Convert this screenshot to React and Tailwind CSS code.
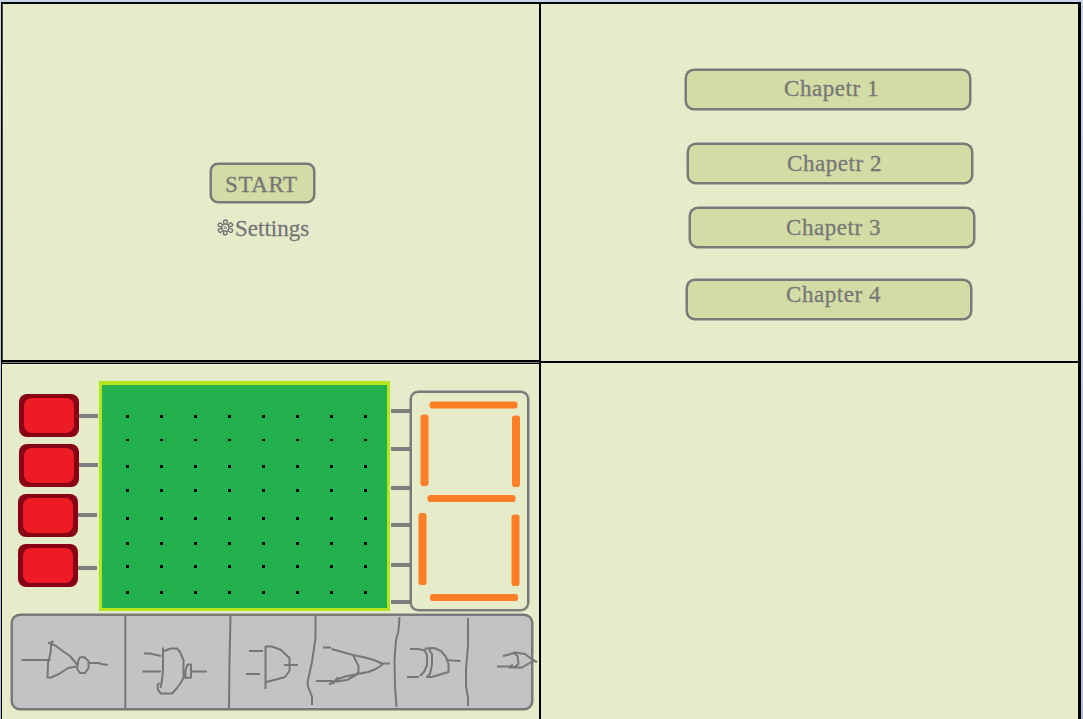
import React from 'react';

const chapters = [
  { label: 'Chapetr 1', box: 'ml-[144px] mt-[65px]', text: 'pl-[97px] pt-[5px]' },
  { label: 'Chapetr 2', box: 'ml-[146px] mt-[33px]', text: 'pl-[98px] pt-[6px]' },
  { label: 'Chapetr 3', box: 'ml-[148px] mt-[23px]', text: 'pl-[95px] pt-[6px]' },
  { label: 'Chapter 4', box: 'ml-[145px] mt-[31px]', text: 'pl-[98px] pt-[1px]' },
];

const inputs = [
  { box: 'ml-[17px]', wire: 'mt-[20px]' },
  { box: 'ml-[17px] mt-[7px]', wire: 'mt-[19px]' },
  { box: 'ml-[16px] mt-[7px]', wire: 'mt-[19px]' },
  { box: 'ml-[16px] mt-[7px]', wire: 'mt-[22px]' },
];

const outputs = ['mt-[45px]', 'mt-[34px]', 'mt-[35px]', 'mt-[33px]', 'mt-[36px]', 'mt-[33px]'];

const dotXs = [126, 160, 194, 228, 262, 296, 330, 364];
const dotYs = [415, 439, 465, 489, 517, 542, 565, 591];

function Gear() {
  return (
    <svg className="mt-[3px] h-[17px] w-[17px]" viewBox="0 0 17 17" fill="none" stroke="#777777">
      <circle cx="8.4" cy="8.6" r="3.6" strokeWidth="1.5" />
      <circle cx="8.4" cy="8.6" r="1.1" strokeWidth="1" />
      <path
        strokeWidth="1.4"
        d="M7.2 4.9 6.4 1.8 8.3 1 10.4 1.7 9.8 4.9M11.4 6.4l1-2 1.8-.5 1.5 1.8-.6 1.4-2.9.7M12.2 9.6l2.6.2 1 1.6-1.2 1.9-1.4.1-2.3-1.7M9.7 12.3l.3 3-1.8.6-1.8-.7.6-3M5.8 11.4l-2.1 2.1-1.7-.6-.8-2 1.1-1.2 2.4-.2M4.7 7.9 1.6 7.2 1 5.7 2.4 4l1.9.4 1.3 1.8"
      />
    </svg>
  );
}

function StartScreen() {
  return (
    <section className="flex h-[356px] flex-col border-l border-[#4a4c40] bg-[#e6ebca] pt-[159px]">
      <button className="ml-[207px] flex h-[40px] w-[105px] items-start rounded-[8px] border-2 border-[#7a7a7a] bg-[#d2dca4] pl-[13px] pt-[7px] text-left leading-[26px] tracking-[0.6px] shadow-[0_0_0_0.5px_#7a7a7a]">
        START
      </button>
      <div className="ml-[214px] mt-[13px] flex h-[26px] items-start leading-[26px]">
        <Gear />
        <span className="ml-px">Settings</span>
      </div>
    </section>
  );
}

function ChapterScreen() {
  return (
    <section className="flex h-[357px] flex-col bg-[#e6ebca]">
      {chapters.map((c) => (
        <button
          key={c.label}
          className={`h-[41px] w-[286px] shrink-0 rounded-[9px] border-2 border-[#7a7a7a] bg-[#d2dca4] text-left shadow-[0_0_0_0.5px_#7a7a7a] ${c.box}`}
        >
          <span className={`flex h-full items-start whitespace-pre leading-[26px] tracking-[0.55px] ${c.text}`}>{c.label}</span>
        </button>
      ))}
    </section>
  );
}

function Inputs() {
  return (
    <div className="flex w-[97px] flex-col pt-[30px]">
      {inputs.map((i, n) => (
        <div key={n} className={`flex h-[43px] shrink-0 ${i.box}`}>
          <div className="h-[43px] w-[60px] shrink-0 rounded-[8px] bg-[#880015] px-[5px] pb-[4px] pt-[4px]">
            <div className="h-full rounded-[8px] bg-[#ed1c24]" />
          </div>
          <div className={`h-[4px] w-[19px] bg-[#7f7f7f] ${i.wire}`} />
        </div>
      ))}
    </div>
  );
}

function Board() {
  return (
    <div className="mt-[17px] h-[230px] w-[291px] shrink-0 border-x-[3px] border-b-[3px] border-t-[4px] border-[#b5e61d] bg-[#22b14c]">
      <svg className="h-[223px] w-[285px]" viewBox="102 385 285 223" shapeRendering="crispEdges">
        {dotYs.map((y) =>
          dotXs.map((x) => <rect key={`${x}-${y}`} x={x} y={y} width="3" height={y === 439 ? 2 : 3} fill="#000" />)
        )}
      </svg>
    </div>
  );
}

function Outputs() {
  return (
    <div className="flex w-[20px] shrink-0 flex-col pl-px">
      {outputs.map((o, n) => (
        <div key={n} className={`h-[4px] w-[19px] shrink-0 bg-[#7f7f7f] ${o}`} />
      ))}
    </div>
  );
}

function Display() {
  return (
    <div className="mt-[27px] h-[220px] w-[119px] shrink-0 rounded-[8px] border-2 border-[#7a7a7a] shadow-[0_0_0_0.5px_#7a7a7a]">
      <svg className="h-[216px] w-[115px]" viewBox="412 393 115 216" fill="#ff7f27">
        <rect x="429.5" y="401.5" width="88" height="7" rx="2.8" />
        <rect x="420.5" y="414.5" width="8" height="71.5" rx="2.8" />
        <rect x="512" y="415.5" width="8" height="71.5" rx="2.8" />
        <rect x="427.5" y="495" width="88" height="7" rx="2.8" />
        <rect x="418.5" y="513" width="8" height="72" rx="2.8" />
        <rect x="511.5" y="514.5" width="8" height="71.5" rx="2.8" />
        <rect x="430" y="594" width="88" height="7" rx="2.8" />
      </svg>
    </div>
  );
}

function GateTray() {
  return (
    <div className="ml-[9px] mt-[2px] h-[96px] w-[522px] shrink-0 rounded-[9px] border-2 border-[#7a7a7a] bg-[#c3c3c3] shadow-[0_0_0_0.5px_#7a7a7a]">
      <svg
        className="h-[92px] w-[518px] overflow-visible"
        viewBox="13 616 518 92"
        fill="none"
        stroke="#777777"
        strokeWidth="2"
        strokeLinejoin="round"
      >
        <path d="M125.3 615V708M230.5 615L229.5 661 229 710M315.5 615.5V638L312 662 308 680Q307 686 309 689L312 697V705M399.5 617L398.5 631 396 640 394.5 660 395 686 396.5 707M468 618V646L466 669V686L468 698V706" />
        <path d="M21.5 660H50.5M51.5 641L50.5 653 48 663 47.5 677.5H51L59 674 68 668 77 666.5M48 642.5L56 646 64 652 70 656 77 664.5M49.5 644.5L53.5 641M80 657.5L84 657 88.5 661V668L85 673H80L77 668.5 78.5 660ZM89 663H99L101 664 108 665" />
        <path d="M144 653.5H150L161 656M142.5 671.5H161M163 647.5V671L162 680 160.5 688M162.5 651.5L171 648.5H177L180 652 183.5 660V678L180 684 177 688 172 693.5H161L158 690 157.5 685 159.5 683M185.5 678V671L187.5 664.5H191V677.5ZM192 671.5H207" />
        <path d="M249 651H263M246 674H260M265.5 689V646M265.5 646.5H272L281 650 289.5 658V671L285 677 278 679 268 681.5 265.5 682.5M284 665H298" />
        <path d="M323 647.5H331M331.5 649L353 655 365 657.5 374 660 383 664 376 669 368 672 345 676.5 336 680 333 684M383 663.5H390M353 655L356 661 358.5 666V672L356 675M316 681H331L337 681.5 347 680 357 674.5M329 684.5L334 682 338 677" />
        <path d="M410 649H418L425 650.5M407 677H419M424 649L427 655V665L424 672 420 676M425 648.5L434 648 441 651 446 657 448.5 664V672L440 674.5 432 677H427L430 674 432 664V654L429 649.5M446 660L460.5 661" />
        <path d="M503 656L509 654.5 515 652.5 525 654 531.5 659 537 662M497 666.5H510L513 665M509 667.5L522 667.5 532 661.5 536 661M513 652.5L517.5 656 518.5 664 514 667.5" />
      </svg>
    </div>
  );
}

function GameScreen() {
  return (
    <section className="flex h-[355px] w-[537px] flex-col bg-[#e6ebca]">
      <div className="flex h-[248px] shrink-0">
        <Inputs />
        <Board />
        <Outputs />
        <Display />
      </div>
      <GateTray />
    </section>
  );
}

export default function App() {
  return (
    <main className="h-[719px] w-[1083px] overflow-hidden bg-gradient-to-b from-[#cbd5ea] to-[#aebdd9] pl-px pt-[2px] font-['Liberation_Serif',serif] text-[23px] text-[#777777] [-webkit-text-stroke:0.3px_#777777]">
      <div className="flex h-[717px] w-[1080px] gap-[2px] bg-black pl-px pr-[3px] pt-[2px]">
        <div className="flex w-[537px] shrink-0 flex-col">
          <StartScreen />
          <div className="flex h-[4px] flex-col pt-[2px]">
            <div className="h-px bg-[#777777]" />
          </div>
          <GameScreen />
        </div>
        <div className="flex w-[537px] shrink-0 flex-col gap-[2px]">
          <ChapterScreen />
          <section className="h-[356px] bg-[#e6ebca]" />
        </div>
      </div>
    </main>
  );
}
